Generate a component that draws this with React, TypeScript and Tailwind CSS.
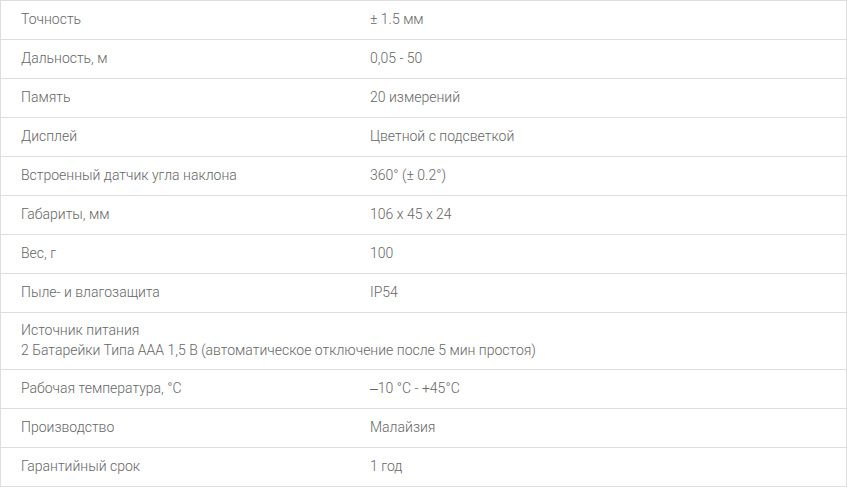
const specs: [string, string][] = [
  ["Точность", "± 1.5 мм"],
  ["Дальность, м", "0,05 - 50"],
  ["Память", "20 измерений"],
  ["Дисплей", "Цветной с подсветкой"],
  ["Встроенный датчик угла наклона", "360° (± 0.2°)"],
  ["Габариты, мм", "106 x 45 x 24"],
  ["Вес, г", "100"],
  ["Пыле- и влагозащита", "IP54"],
];

const tail: [string, string][] = [
  ["Рабочая температура, °C", "‒10 °C - +45°C"],
  ["Производство", "Малайзия"],
  ["Гарантийный срок", "1 год"],
];

function Row({ name, value }: { name: string; value: string }) {
  return (
    <div className="flex border-b border-[#dedede] pt-[8px] pb-[10px] leading-5">
      <div className="w-[369px] shrink-0 pl-5">{name}</div>
      <div>{value}</div>
    </div>
  );
}

export default function App() {
  return (
    <div
      className="w-[847px] bg-white text-[14px] font-light text-[#666]"
      style={{ fontFamily: "Roboto, 'Liberation Sans', sans-serif" }}
    >
      <div className="border-x border-t border-[#dedede]">
        {specs.map(([n, v]) => (
          <Row key={n} name={n} value={v} />
        ))}
        <div className="border-b border-[#dedede] pt-[7px] pb-[9px] leading-5">
          <div className="pl-5">Источник питания</div>
          <div className="pl-5">2 Батарейки Типа AAA 1,5 В (автоматическое отключение после 5 мин простоя)</div>
        </div>
        {tail.map(([n, v]) => (
          <Row key={n} name={n} value={v} />
        ))}
      </div>
    </div>
  );
}
